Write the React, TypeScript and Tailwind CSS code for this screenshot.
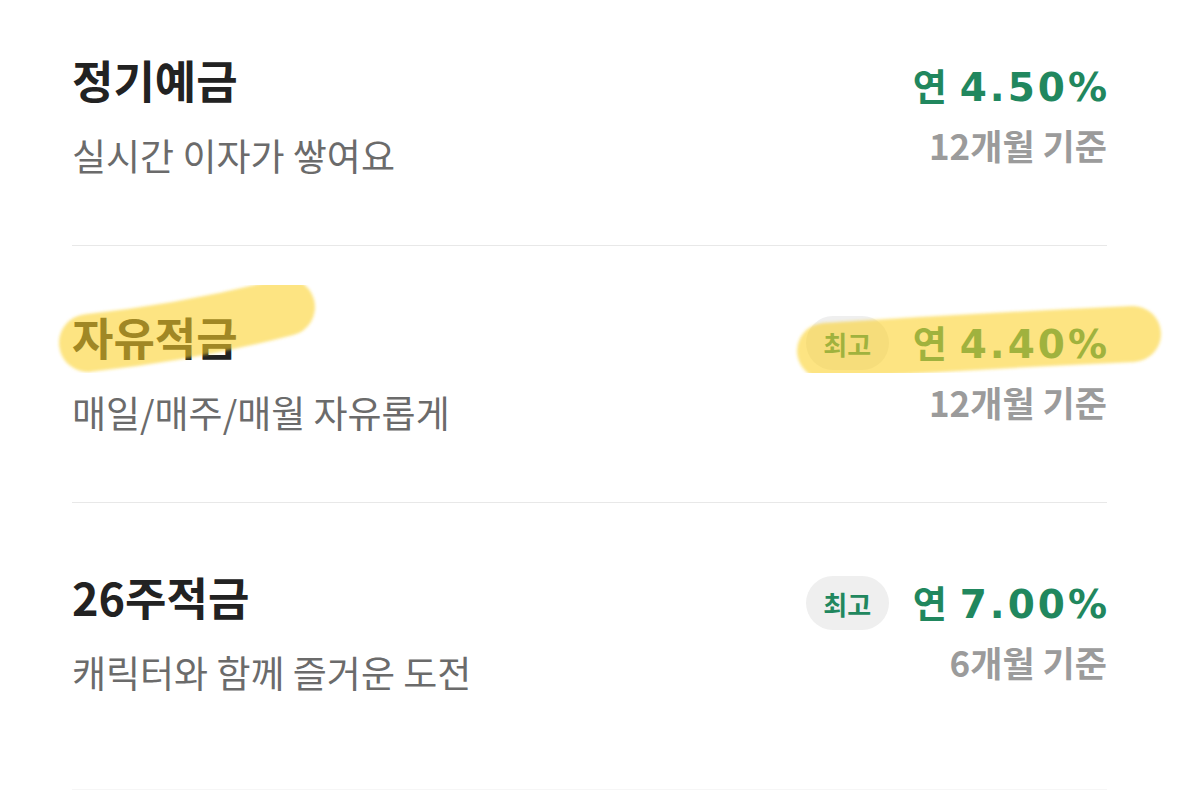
import React, { FC } from "react";

type Product = {
  title: string;
  desc: string;
  rate: string;
  period: string;
  best?: boolean;
  rowClass: string;
};

const products: Product[] = [
  {
    title: "정기예금",
    desc: "실시간 이자가 쌓여요",
    rate: "4.50%",
    period: "12개월 기준",
    rowClass: "h-[246px] pt-[54px] border-b border-[#e8e8e8]",
  },
  {
    title: "자유적금",
    desc: "매일/매주/매월 자유롭게",
    rate: "4.40%",
    period: "12개월 기준",
    best: true,
    rowClass: "h-[257px] pt-[65px] border-b border-[#e8e8e8]",
  },
  {
    title: "26주적금",
    desc: "캐릭터와 함께 즐거운 도전",
    rate: "7.00%",
    period: "6개월 기준",
    best: true,
    rowClass: "h-[287px] pt-[68px] border-b border-[#f6f6f6]",
  },
];

// yellow marker strokes drawn over the list
const Highlights: FC = () => (
  <svg
    className="pointer-events-none absolute inset-0 h-full w-full"
    width="1179"
    height="792"
    viewBox="0 0 1179 792"
  >
    <defs>
      <filter id="soft" x="-10%" y="-50%" width="120%" height="200%">
        <feGaussianBlur stdDeviation="1.6" />
      </filter>
    </defs>
    <g filter="url(#soft)" fill="none" stroke="#fcd028" strokeOpacity="0.58" strokeLinecap="round">
      <path d="M88 343 Q190 332 286 307" strokeWidth="58" />
      <path d="M825 351 Q980 341 1133 334" strokeWidth="56" />
    </g>
  </svg>
);

const App: FC = () => {
  return (
    <div className="relative min-h-screen w-full overflow-hidden bg-white font-['Noto_Sans_CJK_KR',sans-serif]">
      <div className="px-[72px]">
        {products.map((p, index) => (
          <div
            key={`${p.title}-${index}`}
            className={`flex items-start justify-between ${p.rowClass}`}
          >
            <div className="flex flex-col">
              <h3 className="text-[45px] font-bold leading-[52px] text-[#222]">
                {p.title}
              </h3>
              <p className="mt-[27px] text-[37px] leading-[44px] text-[#6b6b6b]">
                {p.desc}
              </p>
            </div>
            <div className="mt-[8px] flex shrink-0 flex-col items-end whitespace-nowrap">
              <div className="flex h-[48px] items-center">
                {p.best && (
                  <span className="mr-[24px] flex h-[54px] w-[83px] items-center justify-center rounded-full bg-[#efefef] text-[26px] font-bold text-[#21875e]">
                    최고
                  </span>
                )}
                <span className="text-[37px] font-bold leading-[48px] text-[#21875e]">
                  연
                  <span className="ml-[13px] mr-[-3px] font-['DejaVu_Sans',sans-serif] text-[39px] tracking-[3px]">
                    {p.rate}
                  </span>
                </span>
              </div>
              <p className="mt-[15px] text-[35px] font-bold leading-[40px] text-[#9b9b9b]">
                {p.period}
              </p>
            </div>
          </div>
        ))}
      </div>
      <Highlights />
    </div>
  );
};

export default App;
